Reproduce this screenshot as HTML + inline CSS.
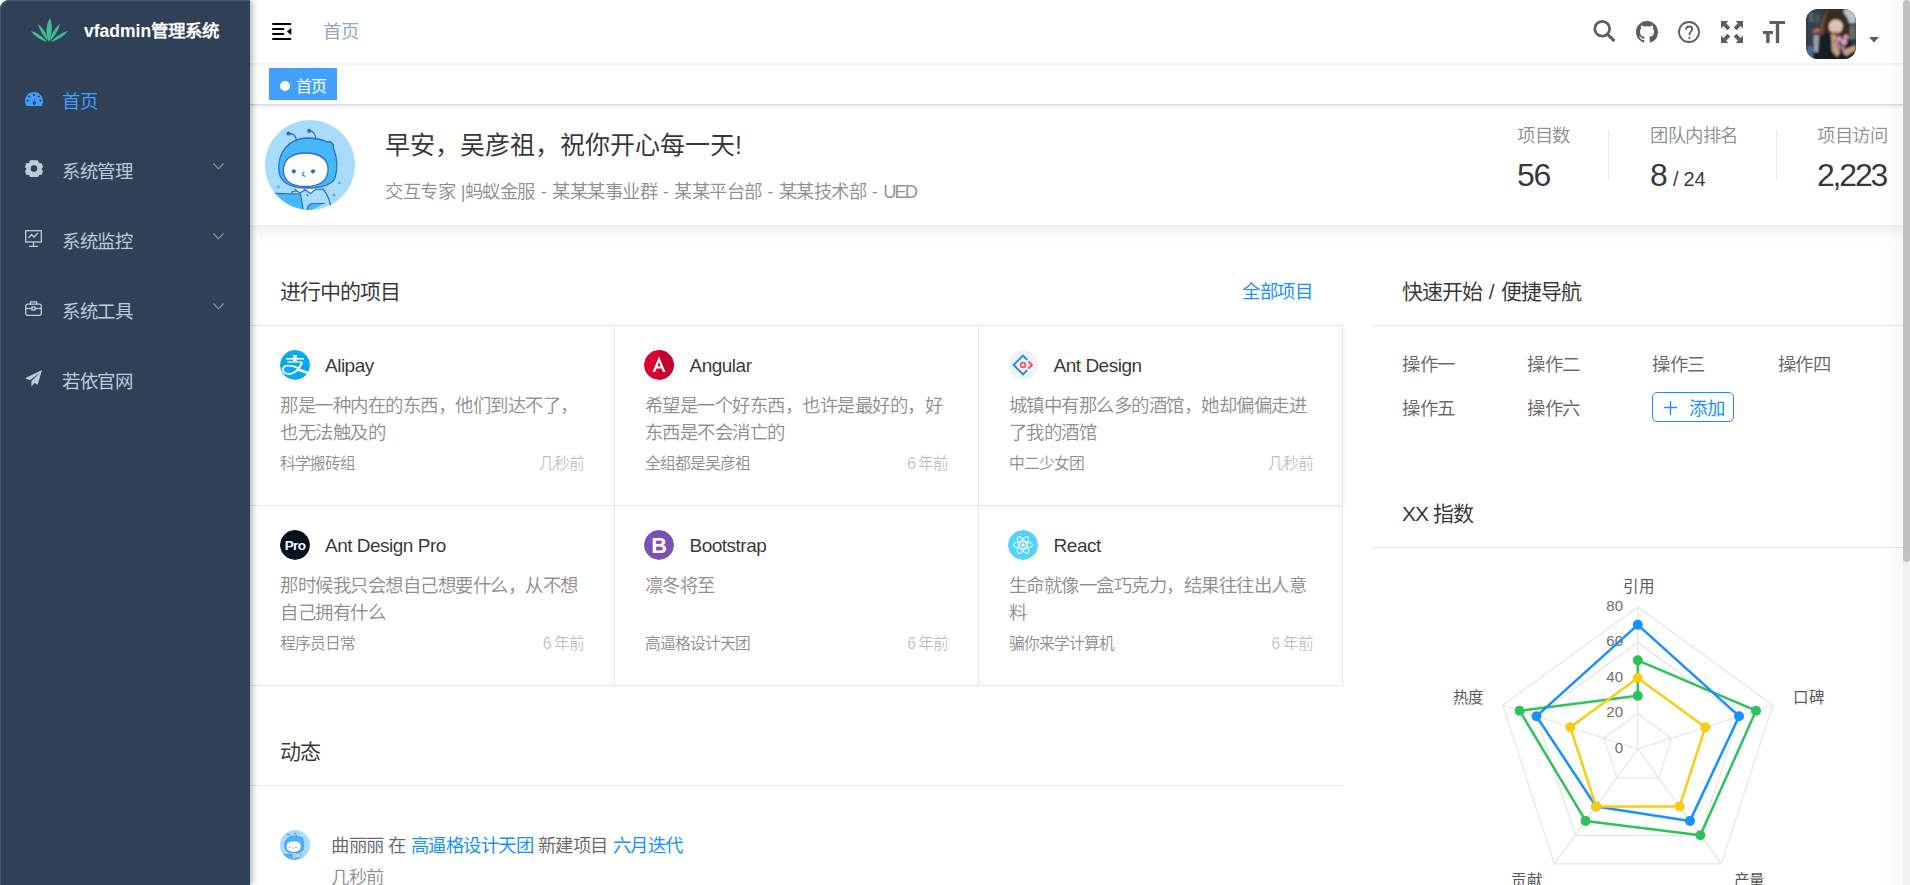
<!DOCTYPE html>
<html lang="zh-CN">
<head>
<meta charset="utf-8">
<style>
*{box-sizing:border-box;margin:0;padding:0}
html,body{width:1910px;height:885px;overflow:hidden;background:#fff}
body{font-family:"Liberation Sans",sans-serif;position:relative;color:#303133}
.abs{position:absolute;white-space:nowrap}
/* sidebar */
#side{position:absolute;left:0;top:0;width:250px;height:885px;background:#304156;border-top-left-radius:9px;z-index:5;box-shadow:inset 1px 1px 0 #4a596b,2px 0 6px rgba(0,21,41,.35)}
.logo-t{position:absolute;left:84px;top:16px;font-size:17.5px;font-weight:bold;color:#fff;line-height:30px}
.mi{position:absolute;left:62px;font-size:18.4px;letter-spacing:-0.5px;color:#bfcbd9;line-height:24px;margin-top:1px}
.arr{position:absolute;left:213px;width:11px;height:7px}
/* navbar */
#nav{position:absolute;left:250px;top:0;width:1653px;height:63px;background:#fff;box-shadow:0 1px 4px rgba(0,21,41,.08);z-index:3}
#tags{position:absolute;left:250px;top:63px;width:1653px;height:42px;background:#fff;border-bottom:1px solid #d8dce5;box-shadow:0 1px 3px 0 rgba(0,0,0,.12),0 0 3px 0 rgba(0,0,0,.04);z-index:2}
#scroll{position:absolute;left:1903px;top:0;width:7px;height:885px;background:#f1f1f1;z-index:6}
#thumb{position:absolute;left:0;top:0;width:7px;height:562px;background:#c1c1c1;border-radius:4px}
/* header card */
#ph{position:absolute;left:250px;top:105px;width:1653px;height:120px;background:#fff;box-shadow:0 3px 16px rgba(0,0,0,.10);z-index:1}

.cj{letter-spacing:-0.5px;font-size:18.4px}
.card-t{position:absolute;font-size:21px;letter-spacing:-1px;line-height:27.5px;color:rgba(0,0,0,.8);white-space:nowrap}
.hl{position:absolute;height:1px;background:#e8e8e8}
.vl{position:absolute;width:1px;background:#e8e8e8}
.logo{position:absolute;width:30px;height:30px;border-radius:50%;overflow:hidden}
.pt{position:absolute;font-size:19px;letter-spacing:-0.5px;line-height:26px;color:rgba(0,0,0,.8);white-space:nowrap}
.pd{position:absolute;font-size:18.4px;letter-spacing:-0.5px;line-height:27.5px;color:rgba(0,0,0,.45);white-space:nowrap}
.pf{position:absolute;font-size:15.8px;letter-spacing:-1px;line-height:20px;color:rgba(0,0,0,.45);white-space:nowrap;margin-top:1px}
.pr{position:absolute;font-size:15.8px;letter-spacing:-1px;line-height:20px;color:rgba(0,0,0,.25);white-space:nowrap;text-align:right;margin-top:1px}
.lk{position:absolute;font-size:18.4px;letter-spacing:-0.5px;line-height:27.5px;color:rgba(0,0,0,.6);white-space:nowrap;margin-top:1px}
</style>
</head>
<body>
<div id="side">
  <svg class="abs" style="left:31px;top:18px" width="37" height="24" viewBox="0 0 37 24">
    <g fill="#43bd93">
      <path d="M18 24 C14 16 15 7 19 0 C22 8 21 17 18 24Z"/>
      <path d="M17 23 C12 18 9 13 7 6 C12 10 16 16 17 23Z"/>
      <path d="M19 23 C24 18 27 13 29 6 C24 10 20 16 19 23Z"/>
      <path d="M16 24 C10 22 4 19 0 13 C7 15 12 19 16 24Z"/>
      <path d="M20 24 C26 22 32 19 37 13 C30 15 24 19 20 24Z"/>
    </g>
  </svg>
  <div class="logo-t">vfadmin管理系统</div>

  <svg class="abs" style="left:25px;top:92px" width="18" height="14" viewBox="0 0 18 14">
    <path fill="#409eff" fill-rule="evenodd" d="M9 0C4 0 0 4 0 9c0 1.8.4 3.4 1.2 5h15.6c.8-1.6 1.2-3.2 1.2-5 0-5-4-9-9-9z
      M9 1.8a1.1 1.1 0 1 1 0 2.2 1.1 1.1 0 0 1 0-2.2z M4.3 3.4a1.1 1.1 0 1 1 0 2.2 1.1 1.1 0 0 1 0-2.2z M13.7 3.4a1.1 1.1 0 1 1 0 2.2 1.1 1.1 0 0 1 0-2.2z
      M2.6 7.6a1.1 1.1 0 1 1 0 2.2 1.1 1.1 0 0 1 0-2.2z M15.4 7.6a1.1 1.1 0 1 1 0 2.2 1.1 1.1 0 0 1 0-2.2z
      M10.2 4.8 9.6 9.6a1.6 1.6 0 1 1-1.6 2.6 1.6 1.6 0 0 1 .9-2.7z"/>
  </svg>
  <div class="mi" style="top:89px;color:#409eff">首页</div>

  <svg class="abs" style="left:25px;top:160px" width="18" height="17" viewBox="0 0 18 17">
    <path fill="#bfcbd9" fill-rule="evenodd" d="M5.2 0.3h7.6l1.2 2.6 2.8.4 1.2 3.6-1.6 2.1 1.6 2.1-1.2 3.6-2.8.4-1.2 2.6H5.2L4 15.1l-2.8-.4L0 11.1l1.6-2.1L0 6.9l1.2-3.6L4 2.9z M9 5.3a3.3 3.3 0 1 0 0 6.6 3.3 3.3 0 0 0 0-6.6z"/>
  </svg>
  <div class="mi" style="top:159px">系统管理</div>
  <svg class="arr" style="top:163px" viewBox="0 0 11 7"><path d="M0.5 0.5 5.5 5.8 10.5 0.5" fill="none" stroke="#909aa8" stroke-width="1.1"/></svg>

  <svg class="abs" style="left:25px;top:230px" width="17" height="17" viewBox="0 0 17 17">
    <g fill="none" stroke="#bfcbd9" stroke-width="1.3">
      <rect x="0.7" y="0.7" width="15.6" height="11.3"/>
      <path d="M3.5 8 6.5 4.5 9 7 13 3"/>
      <path d="M8.5 12v4M4 16.3h9"/>
    </g>
  </svg>
  <div class="mi" style="top:229px">系统监控</div>
  <svg class="arr" style="top:233px" viewBox="0 0 11 7"><path d="M0.5 0.5 5.5 5.8 10.5 0.5" fill="none" stroke="#909aa8" stroke-width="1.1"/></svg>

  <svg class="abs" style="left:25px;top:301px" width="17" height="15" viewBox="0 0 17 15">
    <g fill="none" stroke="#bfcbd9" stroke-width="1.3">
      <rect x="0.7" y="3.2" width="15.6" height="11.1" rx="2"/>
      <path d="M5.5 3.2V0.9h6v2.3"/>
      <path d="M0.7 7.5h15.6"/>
      <rect x="7" y="6" width="3" height="3" fill="#304156"/>
    </g>
  </svg>
  <div class="mi" style="top:299px">系统工具</div>
  <svg class="arr" style="top:303px" viewBox="0 0 11 7"><path d="M0.5 0.5 5.5 5.8 10.5 0.5" fill="none" stroke="#909aa8" stroke-width="1.1"/></svg>

  <svg class="abs" style="left:25px;top:370px" width="17" height="17" viewBox="0 0 17 17">
    <path fill="#bfcbd9" d="M17 0 0 8.2l5 2.1L15 2.5 6.4 11.3v5.4l3-3.6 3.3 1.6z"/>
  </svg>
  <div class="mi" style="top:369px">若依官网</div>
</div>
<div id="nav">
  <svg class="abs" style="left:22px;top:22px" width="20" height="19" viewBox="0 0 20 19">
    <g fill="#000"><rect x="0" y="1" width="19.4" height="2" rx="1"/><rect x="0" y="6" width="12.4" height="2" rx="1"/><rect x="0" y="11" width="12.4" height="2" rx="1"/><rect x="0" y="16" width="19.4" height="2" rx="1"/><path d="M19.3 5.9v7L14.8 9.4z"/></g>
  </svg>
  <div class="abs" style="left:73px;top:20px;font-size:18.4px;letter-spacing:-0.5px;line-height:24px;color:#97a8be">首页</div>
  <svg class="abs" style="left:1343px;top:20px" width="23" height="23" viewBox="0 0 23 23">
    <circle cx="9.2" cy="8.8" r="7.4" fill="none" stroke="#5a5e66" stroke-width="2.7"/>
    <path d="M14.6 14.4 20.4 20.2" stroke="#5a5e66" stroke-width="3.1" stroke-linecap="round"/>
  </svg>
  <svg class="abs" style="left:1386px;top:21px" width="22" height="22" viewBox="0 0 16 16">
    <path fill="#5a5e66" d="M8 0C3.58 0 0 3.58 0 8c0 3.54 2.29 6.53 5.47 7.59.4.07.55-.17.55-.38 0-.19-.01-.82-.01-1.49-2.01.37-2.53-.49-2.69-.94-.09-.23-.48-.94-.82-1.13-.28-.15-.68-.52-.01-.53.63-.01 1.08.58 1.23.82.72 1.21 1.87.87 2.33.66.07-.52.28-.87.51-1.07-1.78-.2-3.64-.89-3.64-3.95 0-.87.31-1.59.82-2.15-.08-.2-.36-1.02.08-2.12 0 0 .67-.21 2.2.82.64-.18 1.32-.27 2-.27.68 0 1.36.09 2 .27 1.53-1.04 2.2-.82 2.2-.82.44 1.1.16 1.92.08 2.12.51.56.82 1.27.82 2.15 0 3.07-1.87 3.75-3.65 3.95.29.25.54.73.54 1.48 0 1.07-.01 1.93-.01 2.2 0 .21.15.46.55.38A8.013 8.013 0 0016 8c0-4.42-3.58-8-8-8z"/>
  </svg>
  <svg class="abs" style="left:1428px;top:21px" width="22" height="22" viewBox="0 0 22 22">
    <circle cx="11" cy="11" r="10" fill="none" stroke="#5a5e66" stroke-width="1.8"/>
    <path d="M8 8.6c0-2 1.3-3.1 3.1-3.1 1.8 0 3.1 1.1 3.1 2.8 0 2.2-2.7 2.4-2.7 4.6v1.4" fill="none" stroke="#5a5e66" stroke-width="1.8"/>
    <circle cx="11.5" cy="16.8" r="1.15" fill="#5a5e66"/>
  </svg>
  <svg class="abs" style="left:1471px;top:21px" width="22" height="22" viewBox="0 0 22 22">
    <g fill="#5a5e66">
      <path id="fa" d="M0 0h7.4L5.1 2.3l4.2 4.2-2.8 2.8-4.2-4.2L0 7.4z"/>
      <path d="M0 0h7.4L5.1 2.3l4.2 4.2-2.8 2.8-4.2-4.2L0 7.4z" transform="translate(22 0) scale(-1 1)"/>
      <path d="M0 0h7.4L5.1 2.3l4.2 4.2-2.8 2.8-4.2-4.2L0 7.4z" transform="translate(0 22) scale(1 -1)"/>
      <path d="M0 0h7.4L5.1 2.3l4.2 4.2-2.8 2.8-4.2-4.2L0 7.4z" transform="translate(22 22) scale(-1 -1)"/>
    </g>
  </svg>
  <svg class="abs" style="left:1513px;top:21px" width="23" height="22" viewBox="0 0 23 22">
    <g fill="#5a5e66"><rect x="6.5" y="0" width="15.5" height="3"/><rect x="12.8" y="0" width="3.4" height="22"/><rect x="0" y="10" width="10" height="3"/><rect x="3.2" y="10" width="3.4" height="12"/></g>
  </svg>
  <div class="abs" style="left:1556px;top:9px;width:50px;height:50px;border-radius:12px;overflow:hidden;background:#1f2a2e">
    <svg width="50" height="50" viewBox="0 0 50 50">
      <defs><filter id="bl" x="-10%" y="-10%" width="120%" height="120%"><feGaussianBlur stdDeviation="0.9"/></filter></defs>
      <g filter="url(#bl)">
      <rect width="50" height="50" fill="#2a3842"/>
      <rect x="0" y="0" width="16" height="36" fill="#33434d"/>
      <rect x="3" y="3" width="4" height="10" fill="#56656c"/><rect x="9" y="5" width="4" height="9" fill="#4a5960"/>
      <rect x="38" y="0" width="12" height="14" fill="#b9c3c6"/>
      <rect x="40" y="16" width="10" height="14" fill="#5d6a6a"/>
      <circle cx="9" cy="22" r="2.2" fill="#c0574a"/><circle cx="12" cy="21" r="1.6" fill="#d8816e"/>
      <circle cx="45" cy="22" r="2" fill="#9a6a5e"/>
      <rect x="0" y="37" width="7" height="13" fill="#466a92"/>
      <path d="M15 31C12 16 15 2 27 0.5 38 0 44 10 44 20c0 6-1 9-3 11z" fill="#3a2a23"/>
      <path d="M14 30C13 18 16 6 22 2 18 10 17 20 17 30z" fill="#7a4a32"/>
      <ellipse cx="29.8" cy="17.5" rx="7" ry="7" fill="#dcc3b5"/>
      <path d="M20 11C22 4 37 3 40 12 34 9 26 9 20 11z" fill="#3a2a23"/>
      <path d="M27.5 22.5c1.5 0.8 3 0.8 4 0" stroke="#c0504a" stroke-width="1.2" fill="none"/>
      <path d="M7 50C7 36 11 26 20 24c6 2 12 3 16 3l7 4 7 10v9z" fill="#161c28"/>
      <path d="M7.5 27c2-1.5 4-1.5 5.5 0l-1 16H8z" fill="#9fa2a8"/>
      <path d="M25 25l5 1 4 18-3 4-5-6z" fill="#c2a07a"/><path d="M36 42l13-6 1 5-10 6z" fill="#c2a07a"/>
      <circle cx="33" cy="30" r="3" fill="#c990a8"/><circle cx="38" cy="33" r="3" fill="#d8a2bb"/><circle cx="32" cy="37" r="2.8" fill="#b98299"/><circle cx="40" cy="28" r="2.5" fill="#d39ab2"/><circle cx="37" cy="39" r="2.4" fill="#a9788e"/>
      <circle cx="34" cy="35" r="1.5" fill="#4f6b46"/><circle cx="29" cy="32" r="1.2" fill="#4f6b46"/>
      </g>
    </svg>
  </div>
  <svg class="abs" style="left:1618.5px;top:36.5px" width="10" height="6" viewBox="0 0 10 6"><path d="M0 0h10L5 5.5z" fill="#5a5e66"/></svg>
</div>
<div id="tags">
  <div class="abs" style="left:19px;top:5px;width:68px;height:32px;background:#42a1ff"></div>
  <div class="abs" style="left:30px;top:18px;width:10px;height:10px;border-radius:50%;background:#fff"></div>
  <div class="abs" style="left:46px;top:13.5px;font-size:16px;letter-spacing:-1px;line-height:20px;color:#fff">首页</div>
</div>
<div id="ph">
  <svg class="abs" style="left:15px;top:15px" width="90" height="90" viewBox="0 0 90 90">
    <defs><clipPath id="cc"><circle cx="45" cy="45" r="45"/></clipPath></defs>
    <circle cx="45" cy="45" r="45" fill="#a8dbfc"/>
    <g clip-path="url(#cc)">
      <path d="M27.5 71.5 C24 78 26 85 28 92 L66 92 C66 84 64 76 58 69z" fill="#a8dbfc" stroke="#2c6bd3" stroke-width="1.2"/>
      <path d="M29.5 69 L35 73 L40 69.5 L45.5 73.5 L51 69" fill="#fff" stroke="#2c6bd3" stroke-width="1.1"/>
      <circle cx="42.5" cy="75" r="0.9" fill="#2c6bd3"/>
      <path d="M-2 73 L35.5 74 L38.5 92 L-2 92z" fill="#45b8fb" stroke="#2c6bd3" stroke-width="1.2"/>
      <path d="M42 92 C42 86 44 83.5 48 83.5 L60 83.5" fill="#45b8fb" stroke="#2c6bd3" stroke-width="1.2"/>
    </g>
    <path d="M31.5 20.5 C31 16 28 13.5 24 13.5" fill="none" stroke="#2c6bd3" stroke-width="1.3"/>
    <path d="M50.7 20.5 C51 14 48 11 44.5 10.8" fill="none" stroke="#2c6bd3" stroke-width="1.3"/>
    <circle cx="23.5" cy="13.5" r="2.1" fill="#2c6bd3"/><circle cx="44.2" cy="10.8" r="2.1" fill="#2c6bd3"/>
    <path d="M14 52 C12 32 24 18.5 42 18 C52 18 58 20 62 22 C66 21 69 23 68.5 28 C71.5 36 73 48 70 58 C66 66 55 68 42 68 C27 68 16 64 14 52z" fill="#45b8fb" stroke="#2c6bd3" stroke-width="1.3"/>
    <path d="M18.5 52 C17.5 40 26 33 40.5 33 C56 33 64 40 63 51 C62 61 54 66.5 40.5 66.5 C27 66.5 19.5 61 18.5 52z" fill="#fff" stroke="#2c6bd3" stroke-width="1.3"/>
    <circle cx="28.8" cy="51.3" r="2.1" fill="#2c6bd3"/><circle cx="48" cy="51.3" r="2.1" fill="#2c6bd3"/>
    <path d="M39.5 52 C37 53 37 56.5 40.5 56" fill="none" stroke="#2c6bd3" stroke-width="1.2"/>
    <circle cx="13.3" cy="67" r="1.4" fill="#45b8fb"/><circle cx="69" cy="75" r="1.5" fill="#45b8fb"/><path d="M74 60.5l2.3 3.3-3.5 0.3z" fill="#45b8fb"/>
  </svg>
  <div class="abs" style="left:135px;top:23px;font-size:25px;line-height:35px;color:rgba(0,0,0,.8)">早安，吴彦祖，祝你开心每一天!</div>
  <div class="abs" style="left:135px;top:72.5px;font-size:18.4px;letter-spacing:-0.5px;word-spacing:1.1px;line-height:27.5px;color:rgba(0,0,0,.45)">交互专家 |蚂蚁金服 - 某某某事业群 - 某某平台部 - 某某技术部 - <span style="letter-spacing:-2px">UED</span></div>

  <div class="abs" style="left:1267px;top:17px;font-size:18.4px;letter-spacing:-0.5px;line-height:27.5px;color:rgba(0,0,0,.45)">项目数</div>
  <div class="abs" style="left:1267px;top:47px;font-size:32px;letter-spacing:-1.2px;line-height:47.5px;color:rgba(0,0,0,.8)">56</div>
  <div class="abs" style="left:1358px;top:25px;width:1px;height:50px;background:#e8e8e8"></div>
  <div class="abs" style="left:1400px;top:17px;font-size:18.4px;letter-spacing:-0.5px;line-height:27.5px;color:rgba(0,0,0,.45)">团队内排名</div>
  <div class="abs" style="left:1400px;top:47px;font-size:32px;line-height:47.5px;color:rgba(0,0,0,.8)">8<span style="font-size:20px;letter-spacing:-0.3px;color:rgba(0,0,0,.8)"> / 24</span></div>
  <div class="abs" style="left:1526px;top:25px;width:1px;height:50px;background:#e8e8e8"></div>
  <div class="abs" style="left:1567px;top:17px;font-size:18.4px;letter-spacing:-0.5px;line-height:27.5px;color:rgba(0,0,0,.45)">项目访问</div>
  <div class="abs" style="left:1567px;top:47px;font-size:32px;letter-spacing:-2.2px;line-height:47.5px;color:rgba(0,0,0,.8)">2,223</div>
</div>
<div id="proj" class="abs" style="left:0;top:0;width:0;height:0">
<div class="abs" style="left:978.6px;top:325.5px;width:364px;height:180px;box-shadow:0 1px 3px rgba(0,0,0,.05),0 2px 6px rgba(0,0,0,.03);background:#fff"></div>
<div class="card-t" style="left:280px;top:278px">进行中的项目</div>
<div class="abs" style="left:1242px;top:278px;font-size:18.4px;letter-spacing:-0.5px;line-height:27.5px;color:#1890ff">全部项目</div>
<div class="hl" style="left:250px;top:325px;width:1093px"></div>
<div class="hl" style="left:250px;top:505px;width:1093px"></div>
<div class="hl" style="left:250px;top:685px;width:1093px"></div>
<div class="vl" style="left:614px;top:325px;height:361px"></div>
<div class="vl" style="left:978px;top:325px;height:361px"></div>
<div class="vl" style="left:1342px;top:325px;height:361px"></div>
<div class="logo" style="left:280px;top:350.0px"><svg width="30" height="30" viewBox="0 0 30 30"><defs><clipPath id="ca"><circle cx="15" cy="15" r="15"/></clipPath></defs><circle cx="15" cy="15" r="15" fill="#06a8f0"/><g clip-path="url(#ca)"><path d="M6 8.7H24" stroke="#fff" stroke-width="1.4"/><rect x="13.2" y="5" width="3.6" height="6.6" fill="#fff"/><path d="M7.4 12H22.2" stroke="#c8ecff" stroke-width="1.4"/><path d="M22 12.2C21 15 20 17 18.6 18.6" stroke="#fff" stroke-width="2.2" fill="none"/><path d="M18.6 18.6C15 16 8 14.5 4.5 16.5 1.5 18.5 2.5 23.5 8 24 13 24.5 16 21.5 18.6 18.6z" fill="none" stroke="#fff" stroke-width="1.7"/><path d="M19 18.6C23 20 27 21 31 22.5L31 25.5C27 24 23 22.5 18 21z" fill="#fff"/></g></svg></div>
<div class="pt" style="left:325px;top:352.5px">Alipay</div>
<div class="pd" style="left:280px;top:391.5px">那是一种内在的东西，他们到达不了，</div>
<div class="pd" style="left:280px;top:419.0px">也无法触及的</div>
<div class="pf" style="left:280px;top:452.5px">科学搬砖组</div>
<div class="pr" style="left:450px;top:452.5px;width:134px">几秒前</div>
<div class="logo" style="left:644px;top:350.0px"><svg width="30" height="30" viewBox="0 0 30 30"><circle cx="15" cy="15" r="15" fill="#dd0031"/><path d="M15 0A15 15 0 0 1 15 30z" fill="#c3002f"/><path d="M15 6.5 8.5 22h2.6l1.4-3.6h5l1.4 3.6h2.6z M13.4 16.2 15 12l1.6 4.2z" fill="#fff" fill-rule="evenodd"/></svg></div>
<div class="pt" style="left:689.5px;top:352.5px">Angular</div>
<div class="pd" style="left:644.5px;top:391.5px">希望是一个好东西，也许是最好的，好</div>
<div class="pd" style="left:644.5px;top:419.0px">东西是不会消亡的</div>
<div class="pf" style="left:644.5px;top:452.5px">全组都是吴彦祖</div>
<div class="pr" style="left:814.5px;top:452.5px;width:134px">6 年前</div>
<div class="logo" style="left:1008px;top:350.0px"><svg width="30" height="30" viewBox="0 0 30 30"><circle cx="15" cy="15" r="15" fill="#eff2f6"/><path d="M19.2 9.9 15 5.6 5.6 15 15 24.4 19.2 20.1" fill="none" stroke="#238be6" stroke-width="2"/><path d="M20.4 11.4 23.9 15 20.4 18.6" fill="none" stroke="#f0505c" stroke-width="2"/><circle cx="15" cy="15" r="2.4" fill="none" stroke="#ef5260" stroke-width="1.6"/></svg></div>
<div class="pt" style="left:1053.6px;top:352.5px">Ant Design</div>
<div class="pd" style="left:1008.6px;top:391.5px">城镇中有那么多的酒馆，她却偏偏走进</div>
<div class="pd" style="left:1008.6px;top:419.0px">了我的酒馆</div>
<div class="pf" style="left:1008.6px;top:452.5px">中二少女团</div>
<div class="pr" style="left:1178.6px;top:452.5px;width:134px">几秒前</div>
<div class="logo" style="left:280px;top:530.0px"><svg width="30" height="30" viewBox="0 0 30 30"><circle cx="15" cy="15" r="15" fill="#03111f"/><text x="15" y="19.8" text-anchor="middle" font-family="Liberation Sans" font-weight="bold" font-size="13.5" fill="#fff" letter-spacing="-0.6">Pro</text></svg></div>
<div class="pt" style="left:325px;top:532.5px">Ant Design Pro</div>
<div class="pd" style="left:280px;top:571.5px">那时候我只会想自己想要什么，从不想</div>
<div class="pd" style="left:280px;top:599.0px">自己拥有什么</div>
<div class="pf" style="left:280px;top:632.5px">程序员日常</div>
<div class="pr" style="left:450px;top:632.5px;width:134px">6 年前</div>
<div class="logo" style="left:644px;top:530.0px"><svg width="30" height="30" viewBox="0 0 30 30"><circle cx="15" cy="15" r="15" fill="#7952b3"/><text x="15.1" y="22.8" text-anchor="middle" font-family="Liberation Sans" font-weight="bold" font-size="21.8" fill="#fff">B</text></svg></div>
<div class="pt" style="left:689.5px;top:532.5px">Bootstrap</div>
<div class="pd" style="left:644.5px;top:571.5px">凛冬将至</div>
<div class="pf" style="left:644.5px;top:632.5px">高逼格设计天团</div>
<div class="pr" style="left:814.5px;top:632.5px;width:134px">6 年前</div>
<div class="logo" style="left:1008px;top:530.0px"><svg width="30" height="30" viewBox="0 0 30 30"><circle cx="15" cy="15" r="15" fill="#52d3fc"/><g fill="none" stroke="#fff" stroke-width="1"><ellipse cx="15" cy="15" rx="9.5" ry="3.6"/><ellipse cx="15" cy="15" rx="9.5" ry="3.6" transform="rotate(60 15 15)"/><ellipse cx="15" cy="15" rx="9.5" ry="3.6" transform="rotate(120 15 15)"/></g><circle cx="15" cy="15" r="1.8" fill="#fff"/></svg></div>
<div class="pt" style="left:1053.6px;top:532.5px">React</div>
<div class="pd" style="left:1008.6px;top:571.5px">生命就像一盒巧克力，结果往往出人意</div>
<div class="pd" style="left:1008.6px;top:599.0px">料</div>
<div class="pf" style="left:1008.6px;top:632.5px">骗你来学计算机</div>
<div class="pr" style="left:1178.6px;top:632.5px;width:134px">6 年前</div>
<div class="card-t" style="left:280px;top:738px">动态</div>
<div class="hl" style="left:250px;top:785px;width:1092px"></div>
<svg class="abs" style="left:280px;top:830px" width="30" height="30" viewBox="0 0 90 90">
    <defs><clipPath id="cc2"><circle cx="45" cy="45" r="45"/></clipPath></defs>
    <circle cx="45" cy="45" r="45" fill="#a8dbfc"/>
    <g clip-path="url(#cc2)">
      <path d="M27.5 71.5 C24 78 26 85 28 92 L66 92 C66 84 64 76 58 69z" fill="#a8dbfc" stroke="#2c6bd3" stroke-width="1.2"/>
      <path d="M29.5 69 L35 73 L40 69.5 L45.5 73.5 L51 69" fill="#fff" stroke="#2c6bd3" stroke-width="1.1"/>
      <circle cx="42.5" cy="75" r="0.9" fill="#2c6bd3"/>
      <path d="M-2 73 L35.5 74 L38.5 92 L-2 92z" fill="#45b8fb" stroke="#2c6bd3" stroke-width="1.2"/>
      <path d="M42 92 C42 86 44 83.5 48 83.5 L60 83.5" fill="#45b8fb" stroke="#2c6bd3" stroke-width="1.2"/>
    </g>
    <path d="M31.5 20.5 C31 16 28 13.5 24 13.5" fill="none" stroke="#2c6bd3" stroke-width="1.3"/>
    <path d="M50.7 20.5 C51 14 48 11 44.5 10.8" fill="none" stroke="#2c6bd3" stroke-width="1.3"/>
    <circle cx="23.5" cy="13.5" r="2.1" fill="#2c6bd3"/><circle cx="44.2" cy="10.8" r="2.1" fill="#2c6bd3"/>
    <path d="M14 52 C12 32 24 18.5 42 18 C52 18 58 20 62 22 C66 21 69 23 68.5 28 C71.5 36 73 48 70 58 C66 66 55 68 42 68 C27 68 16 64 14 52z" fill="#45b8fb" stroke="#2c6bd3" stroke-width="1.3"/>
    <path d="M18.5 52 C17.5 40 26 33 40.5 33 C56 33 64 40 63 51 C62 61 54 66.5 40.5 66.5 C27 66.5 19.5 61 18.5 52z" fill="#fff" stroke="#2c6bd3" stroke-width="1.3"/>
    <circle cx="28.8" cy="51.3" r="2.1" fill="#2c6bd3"/><circle cx="48" cy="51.3" r="2.1" fill="#2c6bd3"/>
    <path d="M39.5 52 C37 53 37 56.5 40.5 56" fill="none" stroke="#2c6bd3" stroke-width="1.2"/>
    <circle cx="13.3" cy="67" r="1.4" fill="#45b8fb"/><circle cx="69" cy="75" r="1.5" fill="#45b8fb"/><path d="M74 60.5l2.3 3.3-3.5 0.3z" fill="#45b8fb"/>
  </svg>
<div class="lk" style="left:331px;top:831px;word-spacing:0.2px">曲丽丽 在 <span style="color:#1890ff">高逼格设计天团</span> 新建项目 <span style="color:#1890ff">六月迭代</span></div>
<div class="lk" style="left:331px;top:863px;color:rgba(0,0,0,.45)">几秒前</div>
<div class="card-t" style="left:1402px;top:278px;word-spacing:2px">快速开始 / 便捷导航</div>
<div class="hl" style="left:1372px;top:325px;width:531px"></div>
<div class="lk" style="left:1402px;top:350px">操作一</div>
<div class="lk" style="left:1527px;top:350px">操作二</div>
<div class="lk" style="left:1652px;top:350px">操作三</div>
<div class="lk" style="left:1777.5px;top:350px">操作四</div>
<div class="lk" style="left:1402px;top:394px">操作五</div>
<div class="lk" style="left:1527px;top:394px">操作六</div>
<div class="abs" style="left:1652px;top:392px;width:82px;height:30px;border:1.25px solid #1890ff;border-radius:5px"></div>
<svg class="abs" style="left:1664px;top:401px" width="13" height="14" viewBox="0 0 13 14"><path d="M6.5 0v14M0 6.5h13" stroke="#1890ff" stroke-width="1.3"/></svg>
<div class="abs" style="left:1689px;top:395px;font-size:18.4px;letter-spacing:-0.5px;line-height:27.5px;color:#1890ff">添加</div>
<div class="card-t" style="left:1402px;top:500px">XX 指数</div>
<div class="hl" style="left:1372px;top:547px;width:531px"></div>
<svg class="abs" style="left:1372px;top:547px" width="531" height="338" viewBox="1372 547 531 338">
<polygon points="1637.80,713.60 1671.56,738.13 1658.67,777.82 1616.93,777.82 1604.04,738.13" fill="none" stroke="#e6e6e6" stroke-width="1.25"/>
<polygon points="1637.80,678.10 1705.33,727.16 1679.53,806.54 1596.07,806.54 1570.27,727.16" fill="none" stroke="#e6e6e6" stroke-width="1.25"/>
<polygon points="1637.80,642.60 1739.09,716.19 1700.40,835.26 1575.20,835.26 1536.51,716.19" fill="none" stroke="#e6e6e6" stroke-width="1.25"/>
<polygon points="1637.80,607.10 1772.85,705.22 1721.27,863.98 1554.33,863.98 1502.75,705.22" fill="none" stroke="#e6e6e6" stroke-width="1.25"/>
<line x1="1637.8" y1="749.1" x2="1637.80" y2="607.10" stroke="#e6e6e6" stroke-width="1.25"/>
<line x1="1637.8" y1="749.1" x2="1772.85" y2="705.22" stroke="#e6e6e6" stroke-width="1.25"/>
<line x1="1637.8" y1="749.1" x2="1721.27" y2="863.98" stroke="#e6e6e6" stroke-width="1.25"/>
<line x1="1637.8" y1="749.1" x2="1554.33" y2="863.98" stroke="#e6e6e6" stroke-width="1.25"/>
<line x1="1637.8" y1="749.1" x2="1502.75" y2="705.22" stroke="#e6e6e6" stroke-width="1.25"/>
<path d="M1637.80,660.35 L1755.97,710.70 L1700.40,835.26 L1585.63,820.90 L1519.63,710.70 L1637.80,695.85 Z" fill="none" stroke="#2fc25b" stroke-width="2.5" stroke-linejoin="round"/>
<circle cx="1637.80" cy="660.35" r="5" fill="#2fc25b"/>
<circle cx="1755.97" cy="710.70" r="5" fill="#2fc25b"/>
<circle cx="1700.40" cy="835.26" r="5" fill="#2fc25b"/>
<circle cx="1585.63" cy="820.90" r="5" fill="#2fc25b"/>
<circle cx="1519.63" cy="710.70" r="5" fill="#2fc25b"/>
<circle cx="1637.80" cy="695.85" r="5" fill="#2fc25b"/>
<path d="M1637.80,624.85 L1739.09,716.19 L1689.97,820.90 L1596.07,806.54 L1536.51,716.19 Z" fill="none" stroke="#1890ff" stroke-width="2.5" stroke-linejoin="round"/>
<circle cx="1637.80" cy="624.85" r="5" fill="#1890ff"/>
<circle cx="1739.09" cy="716.19" r="5" fill="#1890ff"/>
<circle cx="1689.97" cy="820.90" r="5" fill="#1890ff"/>
<circle cx="1596.07" cy="806.54" r="5" fill="#1890ff"/>
<circle cx="1536.51" cy="716.19" r="5" fill="#1890ff"/>
<path d="M1637.80,678.10 L1705.33,727.16 L1679.53,806.54 L1596.07,806.54 L1570.27,727.16 Z" fill="none" stroke="#facc14" stroke-width="2.5" stroke-linejoin="round"/>
<circle cx="1637.80" cy="678.10" r="5" fill="#facc14"/>
<circle cx="1705.33" cy="727.16" r="5" fill="#facc14"/>
<circle cx="1679.53" cy="806.54" r="5" fill="#facc14"/>
<circle cx="1596.07" cy="806.54" r="5" fill="#facc14"/>
<circle cx="1570.27" cy="727.16" r="5" fill="#facc14"/>
<text x="1623" y="752.8" text-anchor="end" font-family="Liberation Sans" font-size="15" fill="#6e6e6e">0</text>
<text x="1623" y="717.3" text-anchor="end" font-family="Liberation Sans" font-size="15" fill="#6e6e6e">20</text>
<text x="1623" y="681.8" text-anchor="end" font-family="Liberation Sans" font-size="15" fill="#6e6e6e">40</text>
<text x="1623" y="646.3" text-anchor="end" font-family="Liberation Sans" font-size="15" fill="#6e6e6e">60</text>
<text x="1623" y="610.8" text-anchor="end" font-family="Liberation Sans" font-size="15" fill="#6e6e6e">80</text>
<text x="1638.5" y="591.5" text-anchor="middle" font-family="Liberation Sans" font-size="15.5" letter-spacing="-0.5" fill="#595959">引用</text>
<text x="1808.5" y="703" text-anchor="middle" font-family="Liberation Sans" font-size="15.5" letter-spacing="-0.5" fill="#595959">口碑</text>
<text x="1749" y="886" text-anchor="middle" font-family="Liberation Sans" font-size="15.5" letter-spacing="-0.5" fill="#595959">产量</text>
<text x="1526.5" y="886" text-anchor="middle" font-family="Liberation Sans" font-size="15.5" letter-spacing="-0.5" fill="#595959">贡献</text>
<text x="1468" y="703" text-anchor="middle" font-family="Liberation Sans" font-size="15.5" letter-spacing="-0.5" fill="#595959">热度</text>
</svg>
</div>
<div class="abs" style="left:1885px;top:0;width:18px;height:885px;background:linear-gradient(to right,rgba(0,0,0,0),rgba(0,0,0,.03));z-index:4;pointer-events:none"></div>
<div id="scroll"><div id="thumb"></div></div>
</body>
</html>
